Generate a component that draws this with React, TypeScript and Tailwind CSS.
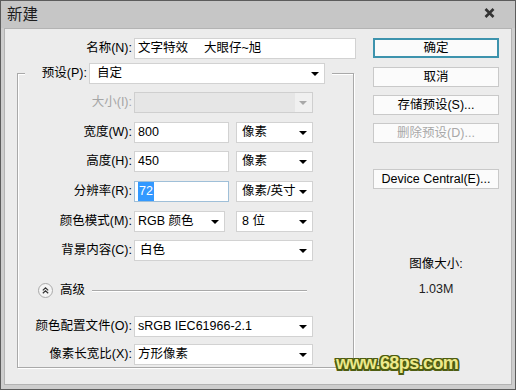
import type { ReactNode } from "react";

function Arrow() {
  return <span className="ml-auto h-0 w-0 border-x-[4px] border-t-[4px] border-x-transparent border-t-black" />;
}

function Select({ value, width, pad = "pl-[5px]", disabled = false }: { value?: string; width: string; pad?: string; disabled?: boolean }) {
  if (disabled) {
    return (
      <div className={`${width} flex h-[21px] items-center border border-[#cfcfcf] bg-[#e6e6e6]`}>
        <div className="ml-auto flex h-full w-[17px] items-center justify-center bg-[#f0f0f0] pr-[1px]">
          <span className="h-0 w-0 border-x-[4px] border-t-[4px] border-x-transparent border-t-[#a8a8a8]" />
        </div>
      </div>
    );
  }
  return (
    <div className={`${width} ${pad} flex h-[21px] items-center border border-[#d2d2d2] bg-white pr-[5px]`}>
      <span>{value}</span>
      <Arrow />
    </div>
  );
}

function Input({ children, width, focused = false }: { children: ReactNode; width: string; focused?: boolean }) {
  return (
    <div
      className={`${width} flex h-[21px] items-center whitespace-pre border bg-white pl-[3px] ${
        focused ? "border-[#9fbfd8]" : "border-[#d2d2d2]"
      }`}
    >
      {children}
    </div>
  );
}

function Row({ label, mt, disabled = false, children }: { label: string; mt: string; disabled?: boolean; children: ReactNode }) {
  return (
    <div className={`${mt} flex h-[21px] items-center`}>
      <div className={`w-[116px] pr-[2px] text-right ${disabled ? "text-[#a5a5a5]" : ""}`}>{label}</div>
      <div className="flex items-center">{children}</div>
    </div>
  );
}

function Button({ label, mt, primary = false, disabled = false }: { label: string; mt: string; primary?: boolean; disabled?: boolean }) {
  return (
    <div
      className={`${mt} flex h-[20px] w-[126px] items-center justify-center bg-[#fbfbfb] ${
        primary ? "border-2 border-[#3d93ad]" : "border border-[#c9c9c9]"
      } ${disabled ? "text-[#a8a8a8]" : "text-black"}`}
    >
      {label}
    </div>
  );
}

export default function App() {
  return (
    <div className="relative flex h-[390px] w-[516px] flex-col border border-[#5c5c5c] bg-[#cdcdcd] font-['Liberation_Sans','Noto_Sans_CJK_SC',sans-serif] text-[12.5px] text-black">
      {/* title bar */}
      <div className="flex h-[27px] items-center justify-between bg-[#c6c6c6] pl-[6px] pr-[20px]">
        <span className="text-[15.5px] text-[#1e1e1e]">新建</span>
        <svg width="11" height="10" viewBox="0 0 11 10" className="mt-[-4px]">
          <path d="M1.5 1 L9.5 9 M9.5 1 L1.5 9" stroke="#333" strokeWidth="2.6" />
        </svg>
      </div>

      {/* dialog body */}
      <div className="mx-[3px] mb-[4px] flex flex-1 border border-[#b3b3b3] bg-[#ececec]">
        <div className="flex w-[351px] flex-col">
          <div className="mt-[9px] flex h-[21px] items-center">
            <div className="w-[129px] pr-[2px] text-right">名称(N):</div>
            <Input width="w-[222px]">文字特效　 大眼仔~旭</Input>
          </div>

          <fieldset className="ml-[12px] mt-[4px] w-[337px] border border-[#a9a9a9] pb-[2px] shadow-[inset_1px_1px_0_#fff,1px_1px_0_#fff]">
            <legend className="ml-[7px] flex items-center bg-[#ececec] pr-[7px]">
              <span className="w-[64px] pr-[2px] text-right">预设(P):</span>
              <Select value="自定" width="w-[236px]" pad="pl-[7px]" />
            </legend>

            <Row label="大小(I):" mt="mt-[8px]" disabled>
              <Select width="w-[179px]" disabled />
            </Row>
            <Row label="宽度(W):" mt="mt-[9px]">
              <Input width="w-[95px]">800</Input>
              <div className="ml-[7px]"><Select value="像素" width="w-[77px]" /></div>
            </Row>
            <Row label="高度(H):" mt="mt-[8px]">
              <Input width="w-[95px]">450</Input>
              <div className="ml-[7px]"><Select value="像素" width="w-[77px]" /></div>
            </Row>
            <Row label="分辨率(R):" mt="mt-[9px]">
              <Input width="w-[95px]" focused>
                <span className="bg-[#3399ff] px-[1px] text-white">72</span>
              </Input>
              <div className="ml-[7px]"><Select value="像素/英寸" width="w-[77px]" /></div>
            </Row>
            <Row label="颜色模式(M):" mt="mt-[9px]">
              <Select value="RGB 颜色" width="w-[91px]" pad="pl-[3px]" />
              <div className="ml-[11px]"><Select value="8 位" width="w-[77px]" /></div>
            </Row>
            <Row label="背景内容(C):" mt="mt-[8px]">
              <Select value="白色" width="w-[179px]" pad="pl-[5px]" />
            </Row>

            {/* advanced toggle */}
            <div className="ml-[20px] mt-[19px] flex h-[21px] items-center">
              <div className="flex h-[15px] w-[15px] items-center justify-center rounded-full border border-[#a9a9a9] bg-[#f4f4f4]">
                <svg width="7" height="7" viewBox="0 0 7 7">
                  <path d="M0.8 3.4 L3.5 0.9 L6.2 3.4 M0.8 6.3 L3.5 3.8 L6.2 6.3" fill="none" stroke="#333" strokeWidth="1.2" />
                </svg>
              </div>
              <span className="ml-[7px]">高级</span>
              <div className="ml-[7px] h-[2px] w-[215px] border-t border-[#a9a9a9] bg-white" />
            </div>

            <Row label="颜色配置文件(O):" mt="mt-[15px]">
              <Select value="sRGB IEC61966-2.1" width="w-[179px]" pad="pl-[3px]" />
            </Row>
            <Row label="像素长宽比(X):" mt="mt-[7px]">
              <Select value="方形像素" width="w-[179px]" pad="pl-[3px]" />
            </Row>
          </fieldset>
        </div>

        <div className="ml-[17px] flex w-[126px] flex-col">
          <Button label="确定" mt="mt-[9px]" primary />
          <Button label="取消" mt="mt-[9px]" />
          <Button label="存储预设(S)..." mt="mt-[8px]" />
          <Button label="删除预设(D)..." mt="mt-[8px]" disabled />
          <Button label="Device Central(E)..." mt="mt-[26px]" />

          <div className="mt-[67px] text-center leading-[16px]">图像大小:</div>
          <div className="mt-[9px] text-center leading-[16px] text-[#222]">1.03M</div>
        </div>
      </div>

      {/* watermark overlay */}
      <div className="absolute left-[335px] top-[349px] text-[18px] font-bold tracking-[-0.6px] text-[#ece98a] [text-shadow:-1.5px_0_0_#4e5d12,1.5px_0_0_#4e5d12,0_-1.5px_0_#4e5d12,0_1.5px_0_#4e5d12,-1.5px_-1.5px_0_#4e5d12,1.5px_1.5px_0_#4e5d12,-1.5px_1.5px_0_#4e5d12,1.5px_-1.5px_0_#4e5d12]">
        www.68ps.com
      </div>
    </div>
  );
}
